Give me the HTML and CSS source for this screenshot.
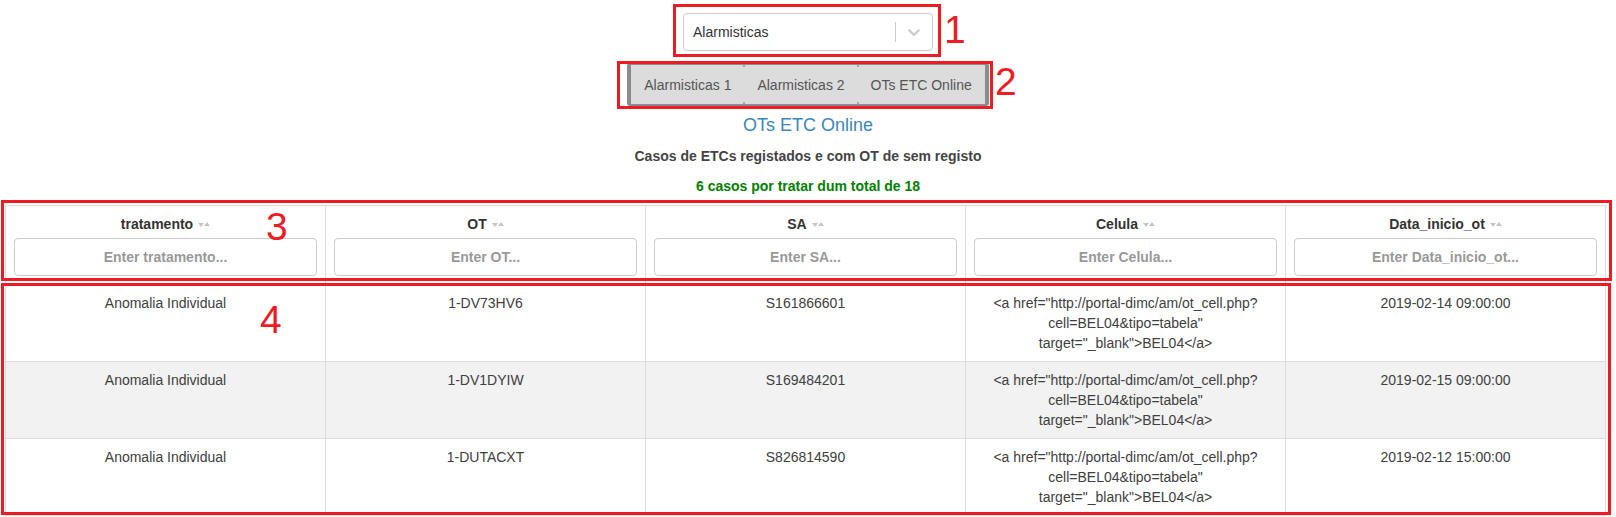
FILE: index.html
```html
<!DOCTYPE html>
<html lang="pt">
<head>
<meta charset="utf-8">
<title>OTs ETC Online</title>
<link rel="stylesheet" href="styles.css">
</head>
<body>
<div class="page">
  <div class="top">
    <div class="select">
      <div class="select-value">Alarmisticas</div>
      <span class="select-sep"></span>
      <span class="select-ind">
        <svg width="20" height="20" viewBox="0 0 20 20"><path fill="#cccccc" d="M4.516 7.548c0.436-0.446 1.043-0.481 1.576 0l3.908 3.747 3.908-3.747c0.533-0.481 1.141-0.446 1.574 0 0.436 0.445 0.408 1.197 0 1.615-0.406 0.418-4.695 4.502-4.695 4.502-0.217 0.223-0.502 0.335-0.787 0.335s-0.57-0.112-0.789-0.335c0 0-4.287-4.084-4.695-4.502s-0.436-1.170 0-1.615z"/></svg>
      </span>
    </div>
    <div class="btn-group">
      <button class="btn">Alarmisticas 1</button>
      <button class="btn">Alarmisticas 2</button>
      <button class="btn">OTs ETC Online</button>
    </div>
    <h3 class="title">OTs ETC Online</h3>
    <h5 class="subtitle">Casos de ETCs registados e com OT de sem registo</h5>
    <p class="count">6 casos por tratar dum total de 18</p>
  </div>

  <div class="table-wrap">
    <table class="grid">
      <thead>
        <tr>
          <th><div class="th-label">tratamento<span class="order"><span class="caret-down"></span><span class="caret-up"></span></span></div><input class="filter" placeholder="Enter tratamento..."></th>
          <th><div class="th-label">OT<span class="order"><span class="caret-down"></span><span class="caret-up"></span></span></div><input class="filter" placeholder="Enter OT..."></th>
          <th><div class="th-label">SA<span class="order"><span class="caret-down"></span><span class="caret-up"></span></span></div><input class="filter" placeholder="Enter SA..."></th>
          <th><div class="th-label">Celula<span class="order"><span class="caret-down"></span><span class="caret-up"></span></span></div><input class="filter" placeholder="Enter Celula..."></th>
          <th><div class="th-label">Data_inicio_ot<span class="order"><span class="caret-down"></span><span class="caret-up"></span></span></div><input class="filter" placeholder="Enter Data_inicio_ot..."></th>
        </tr>
      </thead>
      <tbody>
        <tr>
          <td>Anomalia Individual</td>
          <td>1-DV73HV6</td>
          <td>S161866601</td>
          <td>&lt;a href="http://portal-dimc/am/ot_cell.php?<br>cell=BEL04&amp;tipo=tabela"<br>target="_blank"&gt;BEL04&lt;/a&gt;</td>
          <td>2019-02-14 09:00:00</td>
        </tr>
        <tr class="alt">
          <td>Anomalia Individual</td>
          <td>1-DV1DYIW</td>
          <td>S169484201</td>
          <td>&lt;a href="http://portal-dimc/am/ot_cell.php?<br>cell=BEL04&amp;tipo=tabela"<br>target="_blank"&gt;BEL04&lt;/a&gt;</td>
          <td>2019-02-15 09:00:00</td>
        </tr>
        <tr>
          <td>Anomalia Individual</td>
          <td>1-DUTACXT</td>
          <td>S826814590</td>
          <td>&lt;a href="http://portal-dimc/am/ot_cell.php?<br>cell=BEL04&amp;tipo=tabela"<br>target="_blank"&gt;BEL04&lt;/a&gt;</td>
          <td>2019-02-12 15:00:00</td>
        </tr>
      </tbody>
    </table>
  </div>
</div>

<div class="annot box-1"></div>
<div class="annot box-2"></div>
<div class="annot box-3"></div>
<div class="annot box-4"></div>
<div class="num num-1">1</div>
<div class="num num-2">2</div>
<div class="num num-3">3</div>
<div class="num num-4">4</div>
</body>
</html>
```

FILE: styles.css
```css
* { box-sizing: border-box; }

html, body {
  margin: 0;
  padding: 0;
  background: #ffffff;
}

body {
  font-family: "Liberation Sans", Arial, Helvetica, sans-serif;
  font-size: 14px;
  line-height: 20px;
  color: #333333;
  width: 1616px;
  height: 517px;
  overflow: hidden;
  position: relative;
}

.top {
  display: flex;
  flex-direction: column;
  align-items: center;
}

/* select */
.select {
  margin-top: 13px;
  width: 250px;
  height: 38px;
  border: 1px solid #cccccc;
  border-radius: 4px;
  background: #fff;
  display: flex;
  align-items: center;
}
.select-value {
  flex: 1;
  padding: 2px 8px 2px 9px;
  color: #333333;
}
.select-sep {
  width: 1px;
  align-self: stretch;
  margin: 8px 0;
  background: #cccccc;
}
.select-ind {
  width: 36px;
  height: 36px;
  display: flex;
  align-items: center;
  justify-content: center;
}
.select-ind svg { display: block; }

/* button group */
.btn-group {
  margin-top: 12px;
  display: flex;
  border-style: solid;
  border-color: #8c8c8c;
  border-width: 2px 4px;
  border-radius: 3px;
  background: #dcdcdc;
}
.btn {
  font: inherit;
  color: #555555;
  background: #dcdcdc;
  border: 0;
  padding: 10px 13px 9px;
  line-height: 20px;
  position: relative;
}
.btn + .btn::before,
.btn + .btn::after {
  content: "";
  position: absolute;
  left: -1px;
  width: 2px;
  height: 2px;
  background: #a8a8a8;
}
.btn + .btn::before { top: 0; }
.btn + .btn::after { bottom: 0; }

.title {
  margin: 9px 0 0;
  font-size: 18px;
  font-weight: normal;
  line-height: 20px;
  color: #3a87b9;
}
.subtitle {
  margin: 11px 0 0;
  font-size: 14px;
  font-weight: bold;
  line-height: 20px;
  color: #444444;
}
.count {
  margin: 10px 0 0;
  font-size: 14px;
  font-weight: bold;
  line-height: 20px;
  color: #008000;
}

/* table */
.table-wrap {
  margin-top: 9px;
  padding: 0 10px 0 5px;
}
.grid {
  width: 100%;
  border-collapse: collapse;
  table-layout: fixed;
}
.grid th,
.grid td {
  border: 1px solid #dddddd;
  padding: 8px;
  text-align: center;
  vertical-align: top;
  line-height: 20px;
}
.grid th {
  font-weight: bold;
  color: #333333;
}
.grid td {
  color: #404040;
}
.grid tr.alt td { background: #f2f2f2; }

.th-label {
  white-space: nowrap;
}
.order {
  display: inline-flex;
  align-items: center;
  margin-left: 5px;
  vertical-align: middle;
  position: relative;
  top: -1px;
}
.caret-down,
.caret-up {
  display: inline-block;
  width: 0;
  height: 0;
  border-left: 3.5px solid transparent;
  border-right: 3.5px solid transparent;
}
.caret-down {
  border-top: 4px solid #c4c4c4;
  margin-top: 2px;
}
.caret-up {
  border-bottom: 4px solid #c4c4c4;
}

.filter {
  display: block;
  width: 100%;
  height: 38px;
  margin-top: 4px;
  border: 1px solid #cccccc;
  border-radius: 4px;
  font: inherit;
  font-weight: bold;
  text-align: center;
  color: #555;
  background: #fff;
  padding: 6px 12px;
}
.filter::placeholder {
  color: #999999;
  opacity: 1;
}

/* red annotations drawn over the screenshot */
.annot {
  position: absolute;
  border: 3px solid #ed1c24;
  pointer-events: none;
}
.box-1 { left: 673px; top: 4px; width: 268px; height: 53px; }
.box-2 { left: 617px; top: 61px; width: 376px; height: 48px; }
.box-3 { left: 1px; top: 200px; width: 1611px; height: 81px; }
.box-4 { left: 1px; top: 283px; width: 1610px; height: 232px; }

.num {
  position: absolute;
  font-family: "Liberation Sans", Arial, sans-serif;
  font-size: 39px;
  line-height: 39px;
  color: #ed1c24;
  pointer-events: none;
}
.num-1 { left: 944px; top: 10px; }
.num-2 { left: 995px; top: 62px; }
.num-3 { left: 266px; top: 207px; }
.num-4 { left: 260px; top: 300px; }
```
